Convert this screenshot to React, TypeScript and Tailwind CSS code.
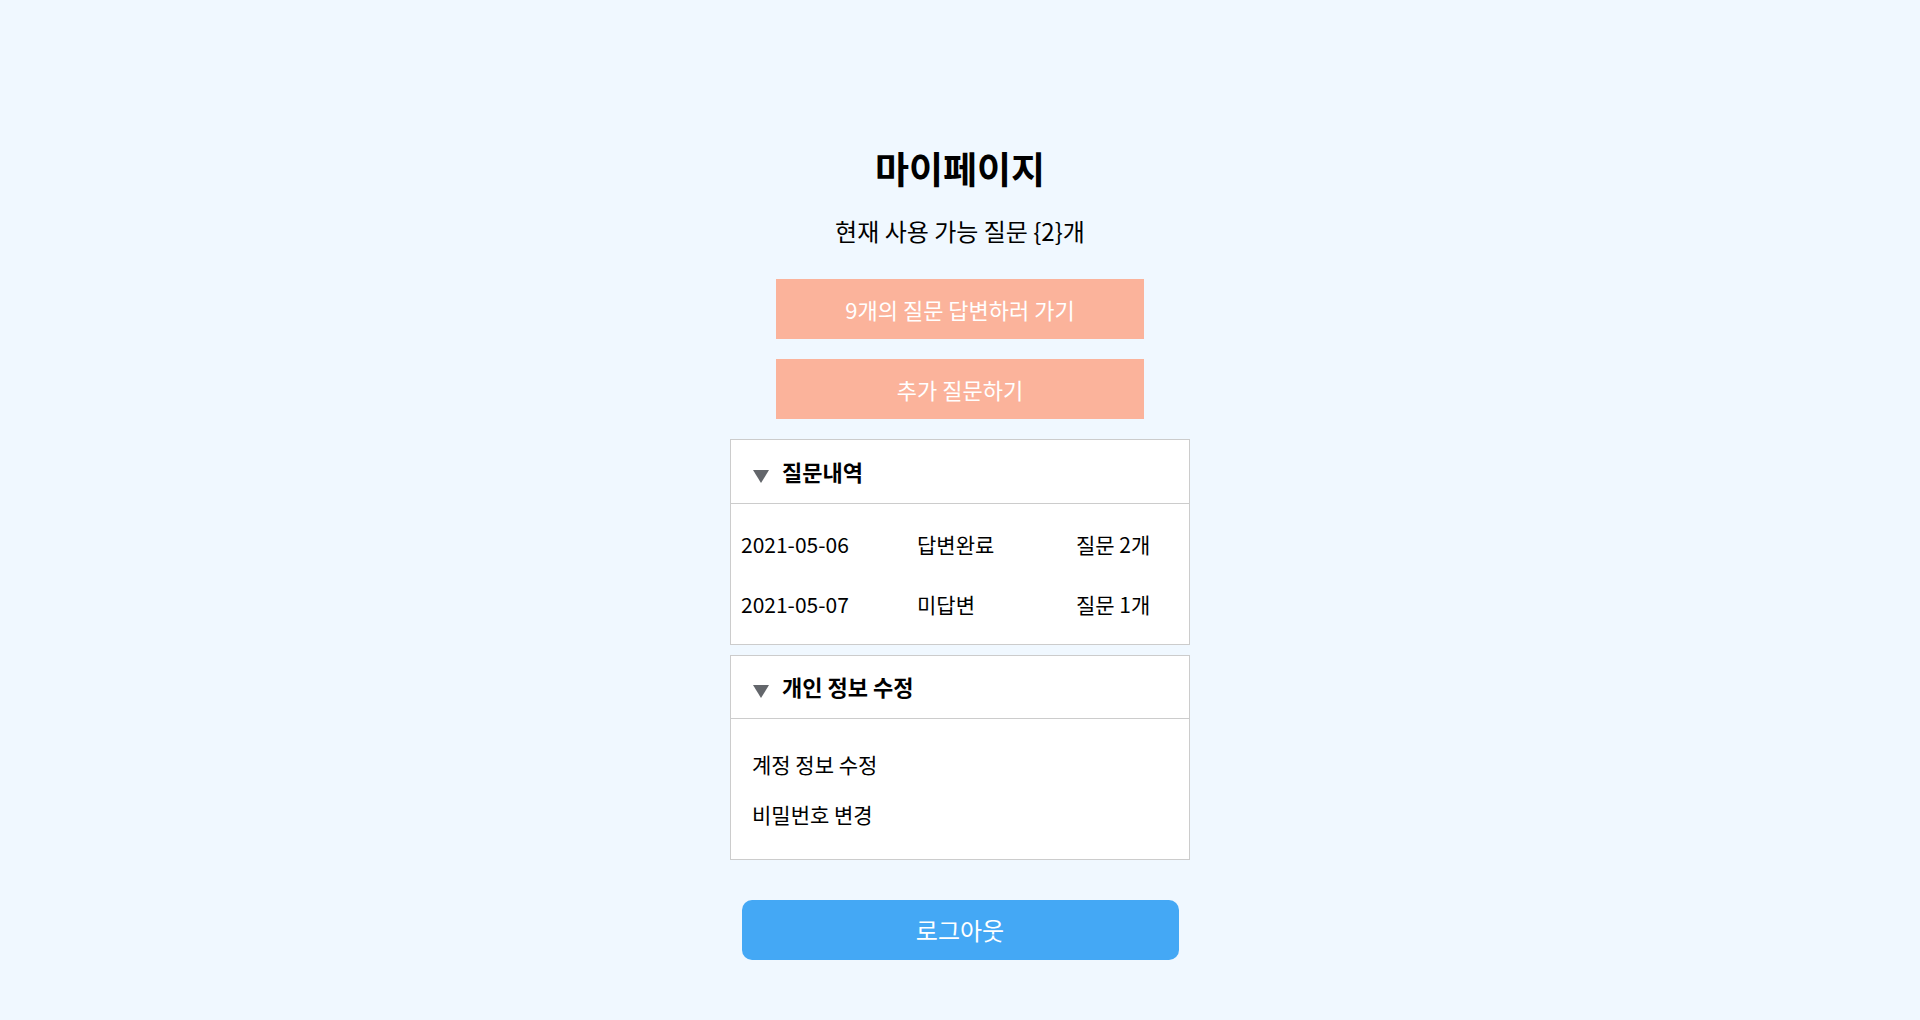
const history = [
  { date: "2021-05-06", status: "답변완료", count: "질문 2개" },
  { date: "2021-05-07", status: "미답변", count: "질문 1개" },
];

const accountMenu = ["계정 정보 수정", "비밀번호 변경"];

function Caret() {
  return (
    <svg width="18" height="14" viewBox="0 0 18 14" className="shrink-0 mt-[10px]">
      <polygon points="1,1 17,1 9,14" fill="#63666b" />
    </svg>
  );
}

function SectionHeader({ title, height }: { title: string; height: string }) {
  return (
    <div className={`${height} flex items-center pl-[21px] gap-[12px] pb-[2px] border-b border-[#cccccc]`}>
      <Caret />
      <span className="text-[22px] font-bold leading-[30px]">{title}</span>
    </div>
  );
}

export default function App() {
  return (
    <div
      className="min-h-screen bg-[#f0f8ff] flex flex-col items-center pt-[145px] pb-[60px] text-black"
      style={{ fontFamily: '"Noto Sans CJK KR", "Noto Sans", sans-serif' }}
    >
      <h1 className="text-[37px] font-bold leading-[46px]">마이페이지</h1>
      <p className="mt-[24px] text-[24px] leading-[32px]">현재 사용 가능 질문 {"{2}"}개</p>

      <button className="mt-[32px] w-[368px] h-[60px] bg-[#fbb39b] text-white text-[22px]">
        9개의 질문 답변하러 가기
      </button>
      <button className="mt-[20px] w-[368px] h-[60px] bg-[#fbb39b] text-white text-[22px]">
        추가 질문하기
      </button>

      <div className="mt-[20px] w-[460px] bg-white border border-[#cccccc]">
        <SectionHeader title="질문내역" height="h-[64px]" />
        <div className="pt-[11px] pb-[9px]">
          {history.map((row) => (
            <div
              key={row.date}
              className="h-[60px] grid grid-cols-[176px_159px_1fr] items-center pl-[10px] text-[21px]"
            >
              <span>{row.date}</span>
              <span>{row.status}</span>
              <span>{row.count}</span>
            </div>
          ))}
        </div>
      </div>

      <div className="mt-[10px] w-[460px] bg-white border border-[#cccccc]">
        <SectionHeader title="개인 정보 수정" height="h-[63px]" />
        <div className="pt-[21px] pb-[19px]">
          {accountMenu.map((item) => (
            <div key={item} className="h-[50px] flex items-center pl-[21px] text-[21px]">
              {item}
            </div>
          ))}
        </div>
      </div>

      <button className="mt-[40px] w-[437px] h-[60px] rounded-[10px] bg-[#44a8f5] text-white text-[24px]">
        로그아웃
      </button>
    </div>
  );
}
